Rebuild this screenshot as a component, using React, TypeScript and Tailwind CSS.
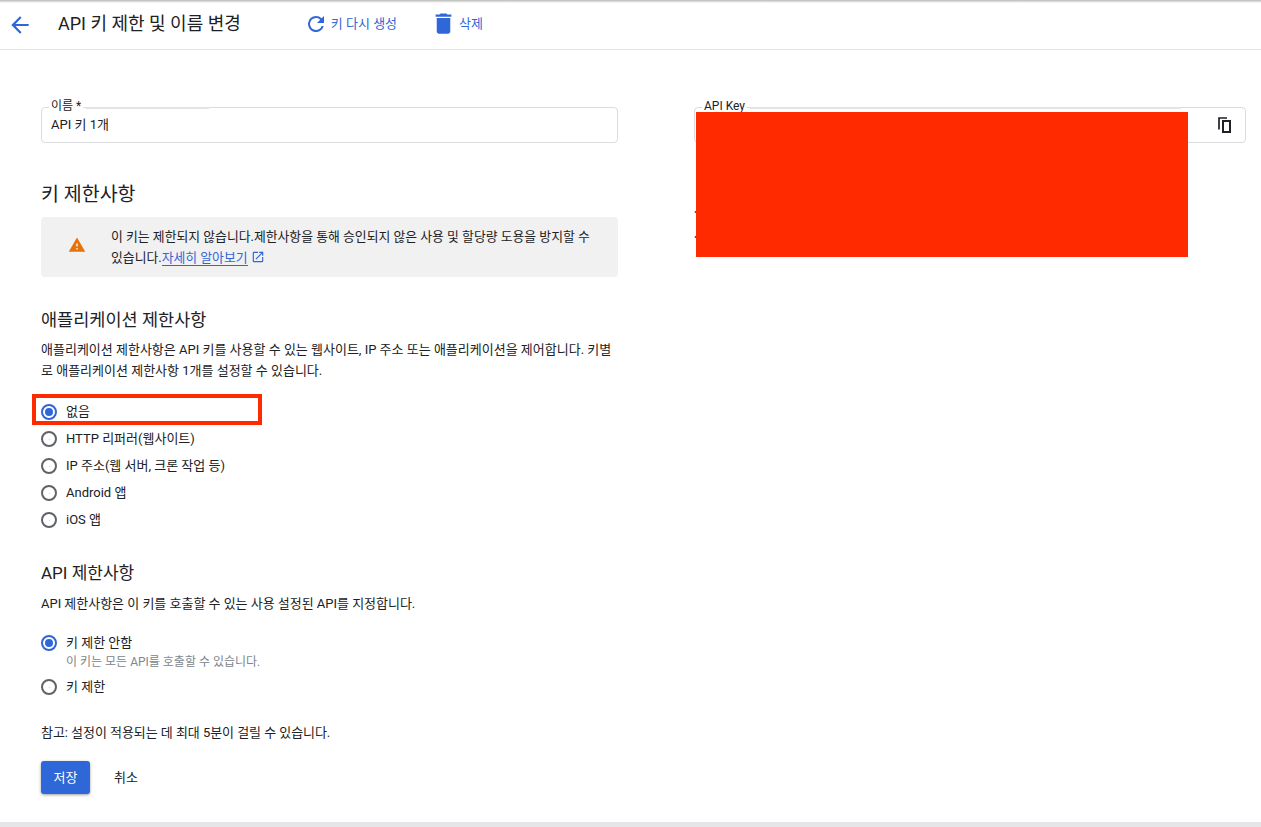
import React from "react";

const font = "font-['Roboto','Noto_Sans_CJK_KR',sans-serif]";

function Radio({ on, label, sub }: { on?: boolean; label: string; sub?: string }) {
  return (
    <div className="flex items-start gap-[9px]">
      <span className={`mt-[1px] flex h-4 w-4 shrink-0 items-center justify-center rounded-full border-2 ${on ? "border-[#2f66d8]" : "border-[#5f6368]"}`}>
        {on ? <span className="h-2 w-2 rounded-full bg-[#2f66d8]" /> : <span className="h-px w-px bg-[#c6d3f0]" />}
      </span>
      <div>
        <div className="text-[13px] leading-[18px] text-[#202124]">{label}</div>
        {sub && <div className="mt-[2px] text-[12px] leading-[16px] text-[#80868b]">{sub}</div>}
      </div>
    </div>
  );
}

function Field({ label, value, width, lineClass, children }: { label: string; value?: string; width: string; lineClass: string; children?: React.ReactNode }) {
  return (
    <div className={`relative flex h-9 items-center justify-between rounded border border-[#dadce0] bg-white pl-[9px] pr-[14px] ${width}`}>
      <span className={`absolute top-[-1px] h-[2px] bg-[#e4e4e4] ${lineClass}`} />
      <span className="absolute left-[7px] top-[-9px] bg-white px-[2px] text-[12px] leading-[14px] text-[#202124]">{label}</span>
      <span className="text-[13px] text-[#202124]">{value}</span>
      {children}
    </div>
  );
}

export default function App() {
  return (
    <div className={`${font} relative flex h-[827px] w-[1261px] flex-col overflow-hidden bg-white`}>
      <div className="h-[3px] bg-gradient-to-b from-[#b9b9b9] to-white" />
      <header className="flex h-[47px] items-center border-b border-[#e3e4e6]">
        <svg className="ml-[7px] mb-[3px] h-[26px] w-[26px]" viewBox="0 0 24 24" fill="#2f66d8">
          <path d="M20 11H7.83l5.59-5.59L12 4l-8 8 8 8 1.41-1.41L7.83 13H20v-2z" />
        </svg>
        <h1 className="ml-[25px] mb-[4px] text-[18px] leading-6 text-[#202124]">API 키 제한 및 이름 변경</h1>
        <div className="ml-[63px] mb-[5px] flex items-center text-[13px] text-[#2f66d8]">
          <svg className="mr-[3px] h-[24px] w-[24px]" viewBox="0 0 24 24" fill="#2f66d8">
            <path d="M17.65 6.35A7.96 7.96 0 0 0 12 4a8 8 0 1 0 7.73 10h-2.08A6 6 0 1 1 12 6c1.66 0 3.14.69 4.22 1.78L13 11h7V4l-2.35 2.35z" />
          </svg>
          키 다시 생성
        </div>
        <div className="ml-[33px] mb-[5px] flex items-center text-[13px] text-[#2f66d8]">
          <svg className="mr-[2px] h-[27px] w-[27px]" viewBox="0 0 24 24" fill="#2f66d8">
            <path d="M6 19c0 1.1.9 2 2 2h8c1.1 0 2-.9 2-2V7H6v12zM19 4h-3.5l-1-1h-5l-1 1H5v2h14V4z" />
          </svg>
          삭제
        </div>
      </header>

      <main className="flex flex-1 pl-[41px] pt-[57px]">
        <section className="w-[577px]">
          <Field label="이름 *" value="API 키 1개" width="w-full" lineClass="left-[44px] w-[123px]" />

          <h2 className="mt-[40px] text-[19.5px] leading-6 text-[#202124]">키 제한사항</h2>
          <div className="mt-[10px] flex h-[60px] items-center rounded bg-[#f1f1f1]">
            <svg className="ml-[27px] mb-[4px] h-[18px] w-[18px] shrink-0" viewBox="0 0 24 24" fill="#e8710a">
              <path d="M1 21h22L12 2 1 21zm12-3h-2v-2h2v2zm0-4h-2v-4h2v4z" />
            </svg>
            <p className="ml-[25px] w-[485px] text-[12.85px] leading-[21px] text-[#202124]">
              이 키는 제한되지 않습니다.제한사항을 통해 승인되지 않은 사용 및 할당량 도용을 방지할 수 있습니다.
              <span className="border-b border-[#2f66d8] text-[#2f66d8]">자세히 알아보기</span>
              <svg className="ml-[3px] inline h-[14px] w-[14px] align-[-2px]" viewBox="0 0 24 24" fill="#2f66d8">
                <path d="M19 19H5V5h7V3H5a2 2 0 0 0-2 2v14a2 2 0 0 0 2 2h14a2 2 0 0 0 2-2v-7h-2v7zM14 3v2h3.59l-9.83 9.83 1.41 1.41L19 6.41V10h2V3h-7z" />
              </svg>
            </p>
          </div>

          <h3 className="mt-[31px] text-[17.5px] leading-6 text-[#202124]">애플리케이션 제한사항</h3>
          <p className="mt-[7px] text-[13px] leading-[21px] text-[#202124]">
            애플리케이션 제한사항은 API 키를 사용할 수 있는 웹사이트, IP 주소 또는 애플리케이션을 제어합니다. 키별로 애플리케이션 제한사항 1개를 설정할 수 있습니다.
          </p>
          <div className="mt-[22px] flex flex-col gap-[9px]">
            <Radio on label="없음" />
            <Radio label="HTTP 리퍼러(웹사이트)" />
            <Radio label="IP 주소(웹 서버, 크론 작업 등)" />
            <Radio label="Android 앱" />
            <Radio label="iOS 앱" />
          </div>

          <h3 className="mt-[32px] text-[17px] leading-6 text-[#202124]">API 제한사항</h3>
          <p className="mt-[10px] text-[13px] leading-[18px] tracking-[-0.02px] text-[#202124]">API 제한사항은 이 키를 호출할 수 있는 사용 설정된 API를 지정합니다.</p>
          <div className="mt-[21px] flex flex-col gap-[8px]">
            <Radio on label="키 제한 안함" sub="이 키는 모든 API를 호출할 수 있습니다." />
            <Radio label="키 제한" />
          </div>
          <p className="mt-[28px] text-[13px] leading-[18px] tracking-[-0.05px] text-[#202124]">참고: 설정이 적용되는 데 최대 5분이 걸릴 수 있습니다.</p>
          <div className="mt-[19px] flex items-center">
            <button className="h-[33px] w-[49px] rounded-[3px] bg-[#2f66d8] text-[13px] text-white shadow-[0_1px_3px_rgba(60,64,67,0.5)]">저장</button>
            <button className="ml-[24px] text-[13px] text-[#202124]">취소</button>
          </div>
        </section>

        <section className="ml-[76px]">
          <Field label="API Key" width="w-[552px]" lineClass="left-[55px] w-[431px]">
            <svg className="h-[16px] w-[13px]" viewBox="0 0 13 16" fill="none" stroke="#202124">
              <path d="M1 12.5V1h8" strokeWidth="1.7" />
              <rect x="5" y="4" width="7" height="11" strokeWidth="2" />
            </svg>
          </Field>
          <div className="mt-[54px] text-[14px] leading-[25px] text-[#202124]">
            <div>사</div>
            <div>사</div>
          </div>
        </section>
      </main>

      <div className="h-[5px] bg-[#e6e6e8]" />

      <div className="absolute left-[696px] top-[112px] h-[145px] w-[492px] bg-[#ff2a00]" />
      <div className="absolute left-[32px] top-[394px] h-[31px] w-[230px] border-[4px] border-[#ff2a00]" />
    </div>
  );
}
